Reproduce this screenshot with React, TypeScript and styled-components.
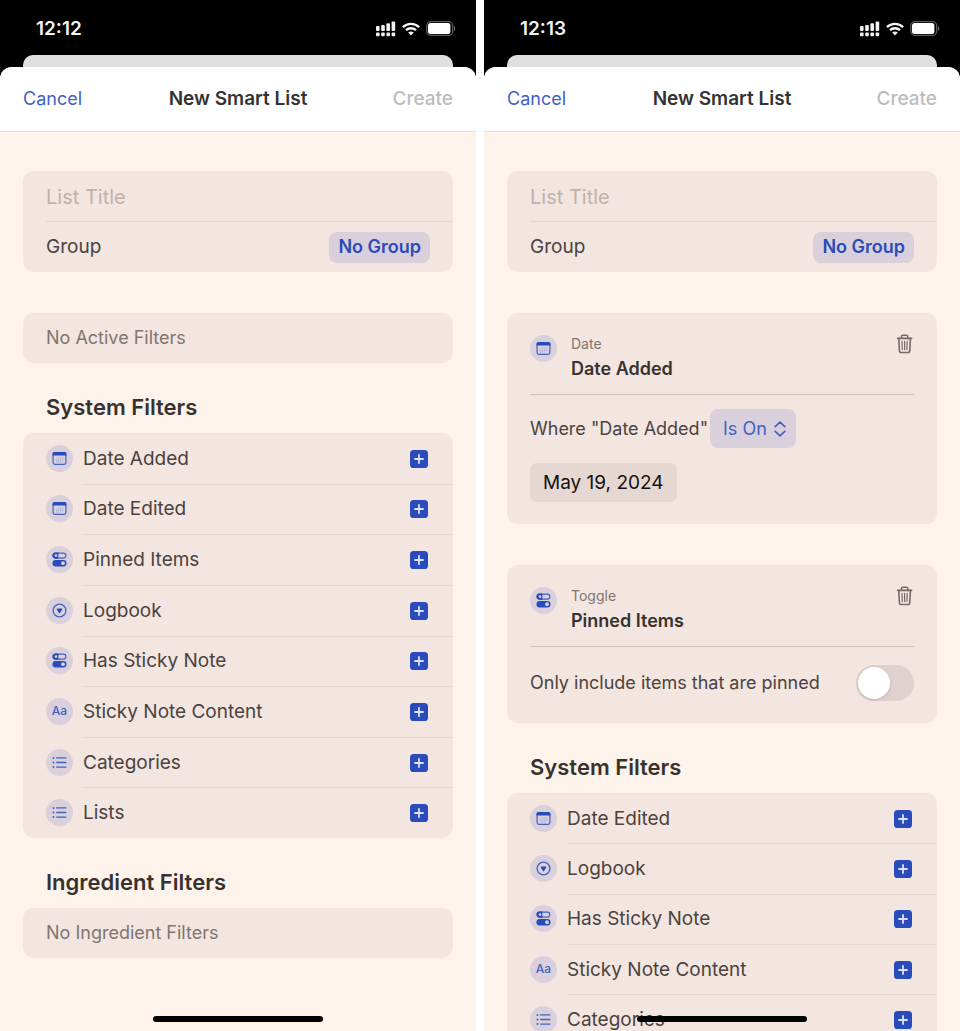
import React from 'react';
import styled, { createGlobalStyle } from 'styled-components';

const color = {
  page: '#fef3ea',
  card: '#f3e5df',
  line: '#e4d8d3',
  rule: '#cfc1bd',
  accent: '#2a4bbb',
  accentSoft: '#4261c0',
  tint: '#d9d0dc',
  text: '#4a4340',
  strong: '#38322f',
  muted: '#7f7571',
  faint: '#bfb2ad',
};

const GlobalStyle = createGlobalStyle`
  *, *::before, *::after { box-sizing: border-box; }
  body {
    margin: 0;
    background: #ffffff;
    font-family: Inter, "Liberation Sans", sans-serif;
    font-size: 19px;
    line-height: 24px;
    color: ${color.text};
  }
  button, input, select { font: inherit; color: inherit; }
  button { border: 0; padding: 0; background: none; cursor: pointer; }
  h1, h2, h3, p, ul { margin: 0; padding: 0; }
  ul { list-style: none; }
`;

const Screens = styled.main`
  display: grid;
  grid-template-columns: 1fr 1fr;
  gap: 8px;
  height: 100vh;
`;

const Phone = styled.section`
  position: relative;
  display: flex;
  flex-direction: column;
  min-width: 0;
  overflow: hidden;
  background: #000000;
`;

const StatusBar = styled.div`
  display: flex;
  flex: none;
  align-items: center;
  justify-content: space-between;
  height: 55px;
  padding: 2px 20px 0 36px;
  color: #f4f4f4;
`;

const Clock = styled.span`
  font-weight: 600;
`;

const StatusIcons = styled.span`
  display: flex;
  align-items: center;
  gap: 6px;
`;

const BackSheet = styled.div`
  flex: none;
  height: 12px;
  margin: 0 23px;
  border-radius: 10px 10px 0 0;
  background: #e0e0e0;
`;

const Sheet = styled.div`
  display: flex;
  flex: 1;
  flex-direction: column;
  min-height: 0;
  border-radius: 12px 12px 0 0;
  overflow: hidden;
  background: ${color.page};
`;

const NavBar = styled.header`
  display: grid;
  flex: none;
  grid-template-columns: 1fr auto 1fr;
  align-items: center;
  height: 65px;
  padding: 0 23px;
  border-bottom: 1px solid #e6dfda;
  background: #ffffff;
`;

const NavTitle = styled.h1`
  font-size: 19px;
  font-weight: 600;
  color: #333333;
`;

const NavButton = styled.button<{ $end?: boolean }>`
  justify-self: ${(p) => (p.$end ? 'end' : 'start')};
  font-size: ${(p) => (p.$end ? 19 : 18)}px;
  font-weight: ${(p) => (p.$end ? 500 : 400)};
  color: ${color.accentSoft};
  &:disabled { color: #bcbcbc; }
`;

const Content = styled.div`
  display: flex;
  flex: 1;
  flex-direction: column;
  min-height: 0;
  padding: 39px 23px 0;
  overflow: hidden;
`;

const Card = styled.div`
  flex: none;
  border-radius: 11px;
  background: ${color.card};
  & + & { margin-top: 41px; }
`;

const Field = styled.div`
  display: flex;
  align-items: center;
  justify-content: space-between;
  height: 50px;
  margin-left: 23px;
  padding-right: 23px;
  & + & {
    height: 51px;
    border-top: 1px solid ${color.line};
  }
`;

const TitleInput = styled.input`
  width: 100%;
  height: 50px;
  padding: 2px 0 0;
  border: 0;
  outline: 0;
  background: none;
  font-size: 20px;
  &::placeholder { color: ${color.faint}; opacity: 1; }
`;

const GroupButton = styled.button`
  height: 31px;
  padding: 0 9px;
  border-radius: 8px;
  background: ${color.tint};
  font-size: 18px;
  font-weight: 600;
  color: ${color.accent};
`;

const EmptyNote = styled.p`
  padding: 13px 23px;
  font-size: 18px;
  color: ${color.muted};
`;

const SectionTitle = styled.h2`
  flex: none;
  padding: 30px 23px 12px;
  font-size: 22px;
  line-height: 28px;
  font-weight: 600;
  color: ${color.strong};
`;

const FilterList = styled.ul<{ $height: number }>`
  display: flex;
  flex: none;
  flex-direction: column;
  min-height: ${(p) => p.$height}px;
  border-radius: 11px;
  background: ${color.card};
`;

const FilterRow = styled.li`
  display: flex;
  flex: 1;
  align-items: center;
  gap: 10px;
  padding-left: 23px;
`;

const FilterLabel = styled.div`
  display: flex;
  flex: 1;
  align-self: stretch;
  align-items: center;
  justify-content: space-between;
  padding-right: 25px;
  border-top: 1px solid ${color.line};
  ${FilterRow}:first-child & { border-top-color: transparent; }
`;

const Badge = styled.span`
  display: flex;
  flex: none;
  align-items: center;
  justify-content: center;
  width: 27px;
  height: 27px;
  border-radius: 50%;
  background: ${color.tint};
  color: ${color.accentSoft};
  font-size: 12px;
  font-weight: 500;
  line-height: 16px;
`;

const AddButton = styled.button`
  display: flex;
  width: 18px;
  height: 18px;
`;

const ActiveCard = styled(Card)`
  padding: 20px 23px 22px;
`;

const ActiveHeader = styled.div`
  display: flex;
  align-items: flex-start;
  gap: 14px;
  padding-bottom: 11px;
  border-bottom: 1px solid ${color.rule};
  ${Badge} { margin-top: 2px; }
`;

const ActiveNames = styled.div`
  flex: 1;
`;

const Kind = styled.p`
  font-size: 14px;
  line-height: 22px;
  color: ${color.muted};
`;

const ActiveTitle = styled.h3`
  font-size: 18px;
  line-height: 28px;
  font-weight: 600;
  color: ${color.strong};
`;

const TrashButton = styled.button`
  display: flex;
  padding-top: 1px;
`;

const Condition = styled.div`
  display: flex;
  align-items: center;
  gap: 2px;
  padding-top: 14px;
  font-size: 18px;
`;

const SelectWrap = styled.span`
  position: relative;
  display: inline-flex;
  color: ${color.accentSoft};
  svg {
    position: absolute;
    top: 12px;
    right: 10px;
    pointer-events: none;
  }
`;

const Select = styled.select`
  height: 39px;
  padding: 0 29px 0 13px;
  border: 0;
  border-radius: 8px;
  appearance: none;
  background: ${color.tint};
`;

const DateButton = styled.button`
  height: 39px;
  margin-top: 15px;
  padding: 0 13px;
  border-radius: 7px;
  background: #e5d8d2;
  color: #15110f;
`;

const ToggleRow = styled.label`
  display: flex;
  align-items: center;
  justify-content: space-between;
  padding-top: 18px;
  font-size: 18px;
`;

const Switch = styled.input`
  flex: none;
  width: 58px;
  height: 36px;
  margin: 0;
  padding: 2px;
  border-radius: 18px;
  appearance: none;
  background: #dfd2ce;
  &::before {
    content: "";
    display: block;
    width: 32px;
    height: 32px;
    border-radius: 50%;
    background: #ffffff;
    box-shadow: 0 1px 3px rgba(0, 0, 0, 0.15);
  }
  &:checked { background: ${color.accent}; }
  &:checked::before { margin-left: 22px; }
`;

const HomeIndicator = styled.div`
  position: absolute;
  bottom: 9px;
  left: 50%;
  width: 170px;
  height: 6px;
  margin-left: -85px;
  border-radius: 3px;
  background: #000000;
`;

const SignalIcon = () => (
  <svg width="20" height="16" viewBox="0 0 20 16" fill="currentColor" aria-hidden="true">
    <rect x="0" y="5" width="3.6" height="5" rx="1" />
    <rect x="5.2" y="4" width="3.6" height="6" rx="1" />
    <rect x="10.4" y="2.3" width="3.6" height="7.7" rx="1" />
    <rect x="15.6" y="0.4" width="3.6" height="9.6" rx="1" />
    <rect x="0" y="11.4" width="3.6" height="3.8" rx="1" />
    <rect x="5.2" y="11.4" width="3.6" height="3.8" rx="1" />
    <rect x="10.4" y="11.4" width="3.6" height="3.8" rx="1" />
    <rect x="15.6" y="11.4" width="3.6" height="3.8" rx="1" />
  </svg>
);

const WifiIcon = () => (
  <svg width="18" height="14" viewBox="0 0 18 14" aria-hidden="true">
    <g fill="none" stroke="currentColor" strokeWidth="2.3">
      <path d="M0.9 5.1C5.4 0.7 12.6 0.7 17.1 5.1" />
      <path d="M4 8.2C6.8 5.6 11.2 5.6 14 8.2" />
    </g>
    <path d="M6.2 10.5C7.8 9.2 10.2 9.2 11.8 10.5L9 13.5Z" fill="currentColor" />
  </svg>
);

const BatteryIcon = () => (
  <svg width="30" height="15" viewBox="0 0 30 15" aria-hidden="true">
    <rect x="0.7" y="0.7" width="26" height="13.6" rx="4" fill="none" stroke="#5a5a5a" strokeWidth="1.3" />
    <rect x="2" y="2" width="22.4" height="11" rx="2.5" fill="#ffffff" />
    <path d="M28 5C29.6 5.6 29.6 9.4 28 10Z" fill="#6a6a6a" />
  </svg>
);

const CalendarIcon = () => (
  <svg width="15" height="15" viewBox="0 0 15 15" aria-hidden="true">
    <rect x="1.1" y="1.6" width="12.8" height="11.8" rx="1.8" fill="none" stroke="currentColor" strokeWidth="1.2" />
    <path d="M0.5 4.4V3.2C0.5 1.9 1.4 1 2.7 1H12.3C13.6 1 14.5 1.9 14.5 3.2V4.4Z" fill={color.accent} />
    <g fill="#a3acd9">
      <path d="M6 6.4H7.2V7.6H6ZM8 6.4H9.2V7.6H8ZM10 6.4H11.2V7.6H10ZM4 8.5H5.2V9.7H4ZM6 8.5H7.2V9.7H6ZM8 8.5H9.2V9.7H8ZM10 8.5H11.2V9.7H10ZM4 10.6H5.2V11.6H4ZM6 10.6H7.2V11.6H6ZM8 10.6H9.2V11.6H8Z" />
    </g>
  </svg>
);

const ToggleIcon = () => (
  <svg width="15" height="15" viewBox="0 0 15 15" aria-hidden="true">
    <rect x="1.1" y="1.1" width="12.8" height="5" rx="2.5" fill="none" stroke="currentColor" strokeWidth="1.2" />
    <path d="M3.5 0.5H6.4V6.7H3.5A3.1 3.1 0 0 1 3.5 0.5Z" fill={color.accent} />
    <circle cx="4" cy="3.6" r="1.3" fill={color.tint} />
    <rect x="0.5" y="8" width="14" height="6.4" rx="3.2" fill={color.accent} />
    <circle cx="11" cy="11.2" r="1.9" fill={color.tint} />
  </svg>
);

const LogbookIcon = () => (
  <svg width="15" height="15" viewBox="0 0 15 15" aria-hidden="true">
    <circle cx="7.5" cy="7.5" r="6.4" fill="none" stroke="currentColor" strokeWidth="1.3" />
    <path d="M5.3 5.6H9.7C10.2 5.6 10.4 6.1 10.2 6.5L8 9.9C7.8 10.3 7.2 10.3 7 9.9L4.8 6.5C4.6 6.1 4.8 5.6 5.3 5.6Z" fill={color.accent} />
  </svg>
);

const ListIcon = () => (
  <svg width="15" height="13" viewBox="0 0 15 13" fill="currentColor" aria-hidden="true">
    <circle cx="1.5" cy="1.9" r="1" />
    <circle cx="1.5" cy="6.5" r="1" />
    <circle cx="1.5" cy="11.1" r="1" />
    <rect x="4" y="1.2" width="10.5" height="1.4" rx="0.7" />
    <rect x="4" y="5.8" width="10.5" height="1.4" rx="0.7" />
    <rect x="4" y="10.4" width="10.5" height="1.4" rx="0.7" />
  </svg>
);

const PlusIcon = () => (
  <svg width="18" height="18" viewBox="0 0 18 18" aria-hidden="true">
    <rect width="18" height="18" rx="3.6" fill={color.accent} />
    <path d="M9 5V13M5 9H13" stroke="#dfe2f3" strokeWidth="1.8" strokeLinecap="round" />
  </svg>
);

const TrashIcon = () => (
  <svg width="18" height="20" viewBox="0 0 18 20" fill="none" stroke="#756b67" strokeWidth="1.6" strokeLinecap="round" aria-hidden="true">
    <path d="M1.6 4.4H15.6" />
    <path d="M5.4 4.2V2.8C5.4 1.9 6 1.3 6.9 1.3H10.3C11.2 1.3 11.8 1.9 11.8 2.8V4.2" />
    <path d="M2.8 4.6L3.4 16.6C3.5 17.8 4.2 18.5 5.3 18.5H11.9C13 18.5 13.7 17.8 13.8 16.6L14.4 4.6" />
    <path d="M6 7.3L6.3 15.6M8.6 7.3V15.6M11.2 7.3L10.9 15.6" strokeWidth="1.2" />
  </svg>
);

const ChevronsIcon = () => (
  <svg width="12" height="16" viewBox="0 0 12 16" fill="none" stroke="currentColor" strokeWidth="1.7" strokeLinecap="round" strokeLinejoin="round" aria-hidden="true">
    <path d="M1.2 5.6L6 1.2L10.8 5.6M1.2 10.4L6 14.8L10.8 10.4" />
  </svg>
);

type Kinds = 'date' | 'toggle' | 'logbook' | 'text' | 'list';

const icons: Record<Kinds, React.ReactNode> = {
  date: <CalendarIcon />,
  toggle: <ToggleIcon />,
  logbook: <LogbookIcon />,
  text: 'Aa',
  list: <ListIcon />,
};

type Filter = { name: string; kind: Kinds };

const filters: Filter[] = [
  { name: 'Date Added', kind: 'date' },
  { name: 'Date Edited', kind: 'date' },
  { name: 'Pinned Items', kind: 'toggle' },
  { name: 'Logbook', kind: 'logbook' },
  { name: 'Has Sticky Note', kind: 'toggle' },
  { name: 'Sticky Note Content', kind: 'text' },
  { name: 'Categories', kind: 'list' },
  { name: 'Lists', kind: 'list' },
];

const remaining = filters.filter((f) => f.name !== 'Date Added' && f.name !== 'Pinned Items');

function SystemFilters({ items, height }: { items: Filter[]; height: number }) {
  return (
    <>
      <SectionTitle>System Filters</SectionTitle>
      <FilterList $height={height}>
        {items.map((f) => (
          <FilterRow key={f.name}>
            <Badge>{icons[f.kind]}</Badge>
            <FilterLabel>
              {f.name}
              <AddButton type="button" aria-label={`Add ${f.name}`}>
                <PlusIcon />
              </AddButton>
            </FilterLabel>
          </FilterRow>
        ))}
      </FilterList>
    </>
  );
}

function ActiveFilterHeader({ kind, label, title }: { kind: Kinds; label: string; title: string }) {
  return (
    <ActiveHeader>
      <Badge>{icons[kind]}</Badge>
      <ActiveNames>
        <Kind>{label}</Kind>
        <ActiveTitle>{title}</ActiveTitle>
      </ActiveNames>
      <TrashButton type="button" aria-label={`Remove ${title}`}>
        <TrashIcon />
      </TrashButton>
    </ActiveHeader>
  );
}

function SmartListScreen({ time, children }: { time: string; children: React.ReactNode }) {
  return (
    <Phone>
      <StatusBar>
        <Clock>{time}</Clock>
        <StatusIcons>
          <SignalIcon />
          <WifiIcon />
          <BatteryIcon />
        </StatusIcons>
      </StatusBar>
      <BackSheet />
      <Sheet>
        <NavBar>
          <NavButton type="button">Cancel</NavButton>
          <NavTitle>New Smart List</NavTitle>
          <NavButton type="button" $end disabled>
            Create
          </NavButton>
        </NavBar>
        <Content>
          <Card>
            <Field>
              <TitleInput type="text" placeholder="List Title" aria-label="List Title" />
            </Field>
            <Field>
              <span>Group</span>
              <GroupButton type="button">No Group</GroupButton>
            </Field>
          </Card>
          {children}
        </Content>
      </Sheet>
      <HomeIndicator />
    </Phone>
  );
}

export default function App() {
  return (
    <>
      <GlobalStyle />
      <Screens>
        <SmartListScreen time="12:12">
          <Card>
            <EmptyNote>No Active Filters</EmptyNote>
          </Card>
          <SystemFilters items={filters} height={405} />
          <SectionTitle>Ingredient Filters</SectionTitle>
          <Card>
            <EmptyNote>No Ingredient Filters</EmptyNote>
          </Card>
        </SmartListScreen>
        <SmartListScreen time="12:13">
          <ActiveCard>
            <ActiveFilterHeader kind="date" label="Date" title="Date Added" />
            <Condition>
              <label htmlFor="date-added-rule">Where "Date Added"</label>
              <SelectWrap>
                <Select id="date-added-rule">
                  <option>Is On</option>
                </Select>
                <ChevronsIcon />
              </SelectWrap>
            </Condition>
            <DateButton type="button">May 19, 2024</DateButton>
          </ActiveCard>
          <ActiveCard>
            <ActiveFilterHeader kind="toggle" label="Toggle" title="Pinned Items" />
            <ToggleRow>
              Only include items that are pinned
              <Switch type="checkbox" />
            </ToggleRow>
          </ActiveCard>
          <SystemFilters items={remaining} height={302} />
        </SmartListScreen>
      </Screens>
    </>
  );
}
